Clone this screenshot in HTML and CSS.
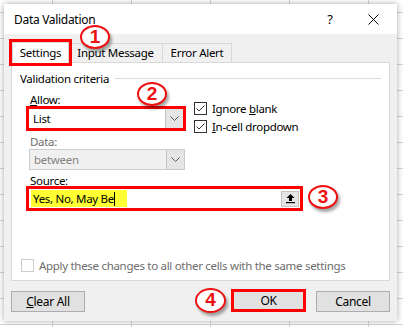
FILE: index.html
```html
<!DOCTYPE html>
<html lang="en">
<head>
  <meta charset="UTF-8">
  <title>Data Validation</title>
  <link rel="stylesheet" href="styles.css">
</head>
<body>
  <div class="dialog">
    <div class="titlebar">
      <span class="title">Data Validation</span>
      <span class="help">?</span>
      <span class="close">
        <svg width="11" height="11" viewBox="0 0 11 11"><path d="M0.5 0.5 L10.5 10.5 M10.5 0.5 L0.5 10.5" stroke="#000" stroke-width="1" fill="none"/></svg>
      </span>
    </div>

    <div class="content">
      <div class="tabs">
        <div class="tab active marked">Settings</div>
        <div class="tab">Input Message</div>
        <div class="tab">Error Alert</div>
      </div>

      <div class="panel">
        <div class="group-title"><span>Validation criteria</span><i class="rule"></i></div>

        <div class="criteria">
          <div class="left-col">
            <div class="label"><u>A</u>llow:</div>
            <div class="combo red">
              <span class="value">List</span>
              <span class="drop"><svg width="9" height="5" viewBox="0 0 9 5"><path d="M0.5 0.5 L4.5 4.5 L8.5 0.5" stroke="#555" fill="none"/></svg></span>
            </div>
            <div class="label dim">Data:</div>
            <div class="combo disabled">
              <span class="value">between</span>
              <span class="drop"><svg width="9" height="5" viewBox="0 0 9 5"><path d="M0.5 0.5 L4.5 4.5 L8.5 0.5" stroke="#555" fill="none"/></svg></span>
            </div>
          </div>
          <div class="checks">
            <div class="check">
              <svg class="box" width="13" height="13" viewBox="0 0 13 13"><rect x="0.5" y="0.5" width="12" height="12" fill="#fff" stroke="#333"/><path d="M2.5 6.5 L5 9 L10.5 3.5" stroke="#333" fill="none"/></svg>
              <span>Ignore <u>b</u>lank</span>
            </div>
            <div class="check">
              <svg class="box" width="13" height="13" viewBox="0 0 13 13"><rect x="0.5" y="0.5" width="12" height="12" fill="#fff" stroke="#333"/><path d="M2.5 6.5 L5 9 L10.5 3.5" stroke="#333" fill="none"/></svg>
              <span><u>I</u>n-cell dropdown</span>
            </div>
          </div>
        </div>

        <div class="label source-label">Source:</div>
        <div class="source red">
          <span class="field"><span class="hl"><span class="typed">Yes, No, May Be</span></span></span>
          <span class="pick">
            <svg width="11" height="11" viewBox="0 0 11 11"><path d="M5.5 1 L9.5 5 L7 5 L7 8 L4 8 L4 5 L1.5 5 Z" fill="#000"/><rect x="1" y="9" width="9" height="1.2" fill="#000"/></svg>
          </span>
        </div>

        <div class="apply">
          <svg class="box" width="13" height="13" viewBox="0 0 13 13"><rect x="0.5" y="0.5" width="12" height="12" fill="#fff" stroke="#cccccc"/></svg>
          <span>Apply these changes to all other cells with the same settings</span>
        </div>
      </div>

      <div class="buttons">
        <button type="button" class="btn"><u>C</u>lear All</button>
        <span class="spacer"></span>
        <button type="button" class="btn ok">OK</button>
        <button type="button" class="btn">Cancel</button>
      </div>
    </div>

    <div class="callout c1">1</div>
    <div class="callout c2">2</div>
    <div class="callout c3">3</div>
    <div class="callout c4">4</div>
  </div>
</body>
</html>
```

FILE: styles.css
```css
html, body {
  margin: 0;
}
body {
  width: 403px;
  height: 327px;
  overflow: hidden;
  box-sizing: border-box;
  padding: 4px 0 0 4px;
  font-family: 'Noto Sans', 'Open Sans', Arial, sans-serif;
  font-size: 11.5px;
  letter-spacing: -0.3px;
  color: #000;
  background-color: #fff;
  background-image:
    linear-gradient(90deg, #d4d4d4 1px, transparent 1px),
    linear-gradient(0deg, #d4d4d4 1px, transparent 1px);
  background-size: 79px 26px;
  background-position: 52px 0, 0 13px;
}
.dialog {
  position: relative;
  width: 393px;
  height: 317px;
  background: #f0f0f0;
  box-shadow: 0 0 6px rgba(0, 0, 0, 0.35);
  display: flex;
  flex-direction: column;
}
.titlebar {
  height: 30px;
  background: #fff;
  display: flex;
  align-items: center;
  padding-left: 10px;
  font-size: 12px;
}
.title {
  flex: 1;
}
.help {
  width: 12px;
  text-align: center;
  font-size: 13px;
  margin-right: 32px;
}
.close {
  display: flex;
  margin-right: 18px;
}
.content {
  flex: 1;
  display: flex;
  flex-direction: column;
  padding: 8px 7px 9px 7px;
}
.tabs {
  display: flex;
  align-items: flex-end;
  height: 20px;
  padding-left: 1px;
}
.tab {
  height: 19px;
  box-sizing: border-box;
  border: 1px solid #d9d9d9;
  border-bottom: none;
  margin-left: -1px;
  display: flex;
  align-items: center;
  justify-content: center;
  white-space: nowrap;
  background: #f0f0f0;
  line-height: 1;
}
.tab:nth-child(2) {
  width: 95px;
}
.tab:nth-child(3) {
  width: 70px;
}
.tab.active {
  position: relative;
  z-index: 2;
  margin-left: 0;
  width: 57px;
  height: 21px;
  margin-bottom: -1px;
  background: #fff;
}
.marked {
  outline: 3px solid #ff0000;
}
.panel {
  height: 219px;
  box-sizing: border-box;
  background: #fff;
  border: 1px solid #d9d9d9;
  padding: 7px 8px 0 8px;
}
.group-title {
  display: flex;
  align-items: center;
  height: 16px;
}
.rule {
  flex: 1;
  height: 1px;
  background: #dcdcdc;
  margin-left: 6px;
}
.label {
  height: 13px;
  line-height: 13px;
  padding-left: 10px;
  margin-top: 7px;
}
.dim {
  color: #6d6d6d;
  margin-top: 4px;
}
.criteria {
  display: flex;
}
.left-col {
  width: 174px;
}
.combo {
  display: flex;
  align-items: center;
  box-sizing: border-box;
  background: #fff;
  margin-left: 6px;
  width: 160px;
  height: 25px;
  border: 1px solid #7a7a7a;
}
.combo.red {
  border: 3px solid #ff0000;
}
.combo.disabled {
  margin-left: 9px;
  margin-top: 1px;
  width: 156px;
  height: 21px;
  background: #f0f0f0;
  border-color: #cccccc;
  color: #838383;
}
.value {
  flex: 1;
  padding-left: 4px;
}
.drop {
  width: 17px;
  align-self: stretch;
  background: #e5e5e5;
  border-left: 1px solid #c4c4c4;
  display: flex;
  align-items: center;
  justify-content: center;
}
.checks {
  margin-top: 16px;
  display: flex;
  flex-direction: column;
  gap: 5px;
}
.check {
  display: flex;
  align-items: center;
  gap: 5px;
  height: 13px;
  white-space: nowrap;
}
.box {
  display: block;
  flex: none;
}
.source-label {
  margin-top: 4px;
}
.source {
  display: flex;
  align-items: center;
  box-sizing: border-box;
  margin-left: 6px;
  margin-top: -1px;
  width: 277px;
  height: 25px;
  background: #fff;
}
.source.red {
  border: 3px solid #ff0000;
}
.field {
  flex: 1;
  padding-left: 2px;
  display: flex;
  align-items: center;
}
.hl {
  background: #ffff33;
  height: 17px;
  display: flex;
  align-items: center;
  padding: 0 12px 0 2px;
}
.typed {
  border-right: 1px solid #000;
  line-height: 14px;
}
.pick {
  width: 18px;
  height: 16px;
  margin-right: 1px;
  background: #e5e5e5;
  border: 1px solid #c4c4c4;
  box-sizing: border-box;
  display: flex;
  align-items: center;
  justify-content: center;
}
.apply {
  margin-top: 48px;
  display: flex;
  align-items: center;
  gap: 5px;
  height: 13px;
  padding-left: 1px;
  color: #6d6d6d;
  white-space: nowrap;
}
.buttons {
  display: flex;
  align-items: flex-start;
  margin-top: 10px;
  height: 21px;
}
.spacer {
  flex: 1;
}
.btn {
  font: inherit;
  font-size: 12px;
  letter-spacing: inherit;
  color: #000;
  width: 74px;
  height: 21px;
  padding: 0;
  background: #e1e1e1;
  border: 1px solid #adadad;
  box-sizing: border-box;
}
.btn.ok {
  width: 75px;
  height: 23px;
  margin-top: -2px;
  margin-right: 10px;
  border: 3px solid #ff0000;
}
.callout {
  position: absolute;
  width: 30px;
  height: 24px;
  box-sizing: border-box;
  border: 2.5px solid #ee1111;
  border-radius: 50%;
  background: #fff;
  color: #ee1111;
  font-family: 'Liberation Sans', Arial, sans-serif;
  font-weight: bold;
  font-size: 19px;
  letter-spacing: 0;
  line-height: 19px;
  text-align: center;
  box-shadow: 2px 3px 3px rgba(0, 0, 0, 0.35);
  z-index: 5;
}
.c1 { left: 76px; top: 21px; }
.c2 { left: 133px; top: 78px; }
.c3 { left: 304px; top: 181px; }
.c4 { left: 191px; top: 284px; width: 31px; height: 25px; }
```
